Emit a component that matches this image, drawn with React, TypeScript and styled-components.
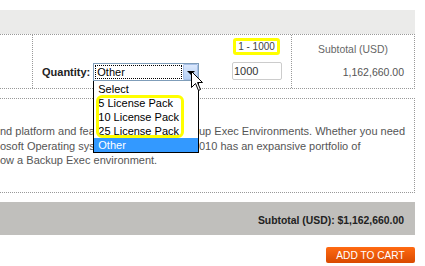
import React from "react";
import styled, { createGlobalStyle } from "styled-components";

const Global = createGlobalStyle`
  html, body { margin: 0; padding: 0; background: #fff; }
  body {
    font-family: "Liberation Sans", Arial, sans-serif;
    width: 425px;
    height: 266px;
    overflow: hidden;
  }
  * { box-sizing: border-box; }
`;

const Page = styled.div`
  width: 415px;
  padding-top: 10px;
  display: flex;
  flex-direction: column;
`;

const HeaderBand = styled.div`
  height: 24px;
  background: #ebebea;
`;

const ProductTable = styled.div`
  display: grid;
  grid-template-columns: 33px 259px 1fr;
  height: 55px;
  border-top: 1px dotted #999;
  border-bottom: 1px dotted #999;
  border-right: 1px dotted #999;
`;

const ImageCell = styled.div`
  border-right: 1px dotted #999;
`;

const QtyCell = styled.div`
  display: flex;
  align-items: flex-start;
  padding: 3px 9px 0 9px;
  border-right: 1px dotted #999;
`;

const QtyGroup = styled.div`
  display: flex;
  align-items: center;
  gap: 3px;
  margin-top: 25px;
`;

const QtyLabel = styled.span`
  font-size: 11px;
  font-weight: bold;
  color: #222;
`;

const SelectWrap = styled.div`
  position: relative;
  width: 106px;
  height: 18px;
`;

const SelectBox = styled.div`
  display: flex;
  width: 100%;
  height: 100%;
  border: 1px solid #7f9db9;
  background: #fff;
  padding: 1px 0 1px 1px;
`;

const SelectValue = styled.div`
  flex: 1;
  border: 1px dotted #000;
  font-size: 11px;
  line-height: 12px;
  color: #000;
  padding-left: 1px;
`;

const SelectButton = styled.div`
  width: 15px;
  margin: -1px 0 -1px 1px;
  background: linear-gradient(#dbe8fc, #b3cff5);
  border: 1px solid #a7c0e8;
  border-radius: 1px;
  display: flex;
  align-items: center;
  justify-content: center;
  padding-top: 2px;
`;

const Arrow = styled.div`
  width: 0;
  height: 0;
  border-left: 4px solid transparent;
  border-right: 4px solid transparent;
  border-top: 4px solid #000;
`;

const OptionList = styled.div`
  position: absolute;
  top: 18px;
  left: 0;
  width: 106px;
  border: 1px solid #000;
  border-top: none;
  background: #fff;
  padding-top: 1px;
  z-index: 2;
`;

const OptionItem = styled.div<{ $active?: boolean }>`
  height: 14px;
  line-height: 14px;
  font-size: 11px;
  padding-left: 4px;
  white-space: nowrap;
  color: ${(p) => (p.$active ? "#fff" : "#000")};
  background: ${(p) => (p.$active ? "#3399ff" : "transparent")};
`;

const OptionHighlight = styled.div`
  position: absolute;
  left: 2px;
  top: 14px;
  width: 88px;
  height: 43px;
  border: 3px solid #ffff00;
  border-radius: 6px;
  pointer-events: none;
`;

const Cursor = styled.svg`
  position: absolute;
  left: 98px;
  top: 8px;
  z-index: 3;
`;

const RangeCol = styled.div`
  margin-left: auto;
  width: 50px;
  display: flex;
  flex-direction: column;
  align-items: flex-start;
  gap: 7px;
`;

const RangeNote = styled.div`
  margin-left: 1px;
  width: 47px;
  height: 17px;
  border: 3px solid #ffff00;
  border-radius: 3px;
  font-size: 10px;
  line-height: 11px;
  color: #444;
  text-align: center;
`;

const QtyInput = styled.div`
  width: 50px;
  height: 18px;
  border: 1px solid #ccc;
  border-radius: 2px;
  font-size: 11px;
  line-height: 16px;
  color: #333;
  padding-left: 1px;
`;

const SubtotalCell = styled.div`
  display: flex;
  flex-direction: column;
  padding: 8px 10px 0 0;
`;

const SubtotalHead = styled.div`
  align-self: center;
  padding-left: 10px;
  font-size: 10.4px;
  line-height: 13px;
  color: #666;
`;

const SubtotalValue = styled.div`
  align-self: flex-end;
  margin-top: 10px;
  font-size: 10.5px;
  line-height: 13px;
  color: #555;
`;

const DescBox = styled.div`
  margin-top: 9px;
  height: 95px;
  border-top: 1px dotted #999;
  border-bottom: 1px dotted #999;
  border-right: 1px dotted #999;
  padding-top: 25px;
  font-size: 11px;
  line-height: 14.5px;
  color: #555;
  white-space: nowrap;
  overflow: hidden;
`;

const DescLine = styled.div`
  display: flex;
  height: 14.5px;
`;

const LineLead = styled.span`
  flex: 0 0 199px;
`;

const TotalBand = styled.div`
  margin-top: 9px;
  height: 33px;
  background: #c0bfbc;
  display: flex;
  align-items: center;
  justify-content: flex-end;
  padding: 3px 11px 0 0;
  font-size: 10.4px;
  font-weight: bold;
  color: #222;
`;

const CartButton = styled.div`
  align-self: flex-end;
  margin-top: 12px;
  width: 89px;
  height: 16px;
  border-radius: 2px;
  background: linear-gradient(#ff6a12, #d94a00);
  color: #fff;
  font-size: 10.2px;
  display: flex;
  align-items: center;
  justify-content: center;
`;

const descLines: [string, string][] = [
  ["nd platform and fea", "up Exec Environments. Whether you need"],
  ["osoft Operating sys", "010 has an expansive portfolio of"],
  ["ow a Backup Exec environment.", ""],
];

export default function App() {
  return (
    <>
      <Global />
      <Page>
        <HeaderBand />
        <ProductTable>
          <ImageCell />
          <QtyCell>
            <QtyGroup>
              <QtyLabel>Quantity:</QtyLabel>
              <SelectWrap>
                <SelectBox>
                  <SelectValue>Other</SelectValue>
                  <SelectButton>
                    <Arrow />
                  </SelectButton>
                </SelectBox>
                <OptionList>
                  <OptionItem>Select</OptionItem>
                  <OptionItem>5 License Pack</OptionItem>
                  <OptionItem>10 License Pack</OptionItem>
                  <OptionItem>25 License Pack</OptionItem>
                  <OptionItem $active>Other</OptionItem>
                  <OptionHighlight />
                </OptionList>
                <Cursor width="13" height="21" viewBox="0 0 13 21">
                  <path
                    d="M0.5 0.5 L0.5 16.5 L4.5 12.5 L7.5 19.5 L9.5 18.5 L6.5 11.5 L11.5 11.5 Z"
                    fill="#fff"
                    stroke="#000"
                    strokeWidth="1"
                    strokeLinejoin="miter"
                  />
                </Cursor>
              </SelectWrap>
            </QtyGroup>
            <RangeCol>
              <RangeNote>1 - 1000</RangeNote>
              <QtyInput>1000</QtyInput>
            </RangeCol>
          </QtyCell>
          <SubtotalCell>
            <SubtotalHead>Subtotal (USD)</SubtotalHead>
            <SubtotalValue>1,162,660.00</SubtotalValue>
          </SubtotalCell>
        </ProductTable>
        <DescBox>
          {descLines.map(([lead, tail], i) => (
            <DescLine key={i}>
              <LineLead>{lead}</LineLead>
              {tail && <span>{tail}</span>}
            </DescLine>
          ))}
        </DescBox>
        <TotalBand>Subtotal (USD): $1,162,660.00</TotalBand>
        <CartButton>ADD TO CART</CartButton>
      </Page>
    </>
  );
}
